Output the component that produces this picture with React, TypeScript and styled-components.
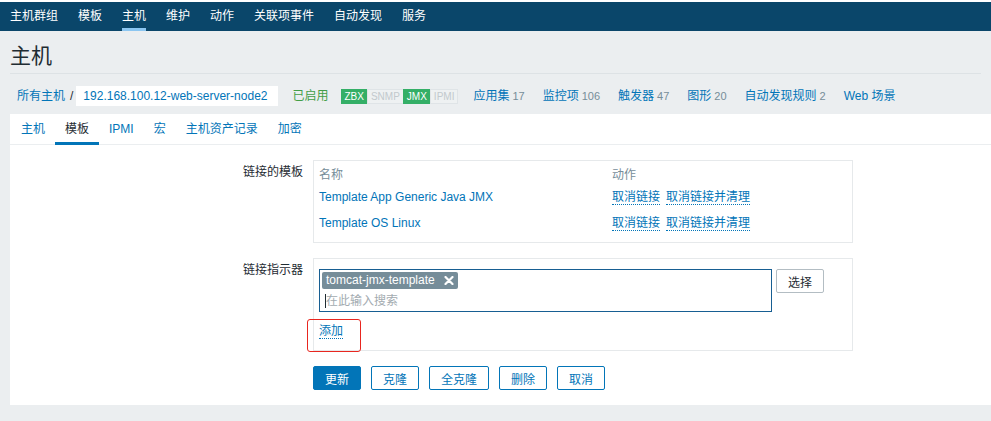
import React from "react";
import styled, { createGlobalStyle, css } from "styled-components";

const GlobalStyle = createGlobalStyle`
  html, body { margin: 0; padding: 0; }
  body {
    background: #ebeef0;
    font-family: "Liberation Sans", Arial, "Noto Sans CJK SC", sans-serif;
    font-size: 12px;
    color: #1f2c33;
    overflow: hidden;
  }
  * { box-sizing: border-box; }
`;

const TopNav = styled.nav`
  height: 31px;
  border-top: 2px solid #ffffff;
  background: #0a466a;
  display: flex;
`;

const NavItem = styled.a<{ $active?: boolean }>`
  position: relative;
  padding: 0 10px;
  line-height: 29px;
  color: #ffffff;
  text-decoration: none;
  ${(p) =>
    p.$active &&
    css`
      &::after {
        content: "";
        position: absolute;
        left: 10px;
        right: 10px;
        bottom: 0;
        height: 3px;
        background: #8cc6f1;
      }
    `}
`;

const PageHeader = styled.header`
  margin: 0 10px;
  padding: 13px 0 5px;
  border-bottom: 1px solid #dde2e5;
`;

const Title = styled.h1`
  margin: 0;
  font-size: 21px;
  line-height: 24px;
  font-weight: normal;
  color: #1f2c33;
`;

const Breadcrumbs = styled.div`
  margin: 0 10px;
  padding: 12px 0 8px 7px;
  display: flex;
  align-items: center;
  line-height: 14px;
`;

const CrumbLink = styled.a`
  color: #0275b8;
  text-decoration: none;
`;

const CrumbSep = styled.span`
  margin: 0 3px 0 5px;
  color: #1f2c33;
`;

const CurrentHost = styled.span`
  background: #ffffff;
  color: #0275b8;
  line-height: 20px;
  padding: 0 11px 0 7px;
`;

const Enabled = styled.span`
  margin-left: 14px;
  color: #429e47;
`;

const StatusGroup = styled.div`
  margin-left: 12px;
  display: flex;
`;

const StatusBox = styled.span<{ $on?: boolean }>`
  font-size: 10px;
  line-height: 13px;
  padding: 0 3px;
  border: 1px solid ${(p) => (p.$on ? "#34af67" : "#dfe4e7")};
  background: ${(p) => (p.$on ? "#34af67" : "#eef1f2")};
  color: ${(p) => (p.$on ? "#ffffff" : "#c2c9cd")};
  & + & {
    margin-left: -1px;
  }
`;

const HostLinks = styled.div`
  margin-left: 15px;
  display: flex;
  gap: 18px;
`;

const HostLink = styled.a`
  color: #0275b8;
  text-decoration: none;
  white-space: nowrap;
`;

const Count = styled.span`
  margin-left: 3px;
  font-size: 11px;
  color: #768d99;
`;

const Content = styled.main`
  margin-left: 10px;
  background: #ffffff;
  padding-bottom: 15px;
`;

const TabList = styled.div`
  display: flex;
  padding-left: 1px;
  border-bottom: 1px solid #ebeef0;
`;

const Tab = styled.a<{ $active?: boolean }>`
  padding: 8px 10px 6px;
  line-height: 14px;
  margin-bottom: -1px;
  border-bottom: 3px solid ${(p) => (p.$active ? "#0275b8" : "transparent")};
  color: ${(p) => (p.$active ? "#1f2c33" : "#0275b8")};
  text-decoration: none;
`;

const Form = styled.div`
  padding-top: 15px;
  display: flex;
  flex-direction: column;
  gap: 15px;
`;

const FormRow = styled.div`
  display: grid;
  grid-template-columns: 303px 540px;
  align-items: start;
`;

const Label = styled.label`
  text-align: right;
  padding: 5px 10px 0 0;
  line-height: 14px;
`;

const FieldBox = styled.div<{ $pad: string }>`
  position: relative;
  border: 1px solid #e6e9eb;
  padding: ${(p) => p.$pad};
`;

const Table = styled.table`
  border-collapse: collapse;
  width: 100%;
`;

const Th = styled.th`
  text-align: left;
  font-weight: normal;
  color: #768d99;
  height: 19px;
  padding: 0;
  line-height: 14px;
  vertical-align: middle;
`;

const Td = styled.td<{ $w?: number }>`
  height: 26px;
  padding: 0;
  line-height: 14px;
  vertical-align: middle;
  ${(p) => p.$w && `width: ${p.$w}px;`}
`;

const TemplateLink = styled.a`
  color: #0275b8;
  text-decoration: none;
`;

const ActionLink = styled.a`
  color: #0275b8;
  text-decoration: none;
  border-bottom: 1px dotted #0275b8;
  margin-right: 6px;
`;

const SelectRow = styled.div`
  display: flex;
  align-items: flex-start;
  gap: 4px;
`;

const MultiSelect = styled.div`
  width: 453px;
  height: 43px;
  border: 1px solid #175e92;
  padding: 2px;
  background: #ffffff;
`;

const Chip = styled.span`
  display: inline-flex;
  align-items: center;
  height: 17px;
  padding: 0 4px;
  background: #768d99;
  color: #ffffff;
  border-radius: 2px;
  line-height: 17px;
`;

const ChipRemove = styled.svg`
  margin-left: 9px;
  width: 10px;
  height: 9px;
`;

const SearchLine = styled.div`
  display: flex;
  margin-top: 5px;
  padding-left: 3px;
  line-height: 14px;
  color: #a3abb0;
`;

const Caret = styled.span`
  width: 1px;
  height: 14px;
  background: #1f2c33;
`;

const GreyButton = styled.button`
  height: 24px;
  padding: 0 11px;
  border: 1px solid #b3bdc3;
  border-radius: 2px;
  background: #ffffff;
  color: #1f2c33;
  font: inherit;
`;

const AddRow = styled.div`
  margin-top: 12px;
  line-height: 14px;
`;

const Annotation = styled.div`
  position: absolute;
  left: -7px;
  top: 60px;
  width: 54px;
  height: 33px;
  border: 1px solid #e8261f;
  border-radius: 3px;
  pointer-events: none;
`;

const ButtonRow = styled.div`
  grid-column: 2;
  display: flex;
  gap: 10px;
`;

const Button = styled.button<{ $primary?: boolean }>`
  height: 24px;
  padding: 0 11px;
  border: 1px solid #0275b8;
  border-radius: 2px;
  background: ${(p) => (p.$primary ? "#0275b8" : "#ffffff")};
  color: ${(p) => (p.$primary ? "#ffffff" : "#0275b8")};
  font: inherit;
`;

const navItems = ["主机群组", "模板", "主机", "维护", "动作", "关联项事件", "自动发现", "服务"];
const tabs = ["主机", "模板", "IPMI", "宏", "主机资产记录", "加密"];
const hostLinks: [string, string | null][] = [
  ["应用集", "17"],
  ["监控项", "106"],
  ["触发器", "47"],
  ["图形", "20"],
  ["自动发现规则", "2"],
  ["Web 场景", null],
];
const templates = ["Template App Generic Java JMX", "Template OS Linux"];

export default function App() {
  return (
    <>
      <GlobalStyle />
      <TopNav>
        {navItems.map((n) => (
          <NavItem key={n} $active={n === "主机"}>
            {n}
          </NavItem>
        ))}
      </TopNav>
      <PageHeader>
        <Title>主机</Title>
      </PageHeader>
      <Breadcrumbs>
        <CrumbLink>所有主机</CrumbLink>
        <CrumbSep>/</CrumbSep>
        <CurrentHost>192.168.100.12-web-server-node2</CurrentHost>
        <Enabled>已启用</Enabled>
        <StatusGroup>
          <StatusBox $on>ZBX</StatusBox>
          <StatusBox>SNMP</StatusBox>
          <StatusBox $on>JMX</StatusBox>
          <StatusBox>IPMI</StatusBox>
        </StatusGroup>
        <HostLinks>
          {hostLinks.map(([name, count]) => (
            <HostLink key={name}>
              {name}
              {count && <Count>{count}</Count>}
            </HostLink>
          ))}
        </HostLinks>
      </Breadcrumbs>
      <Content>
        <TabList>
          {tabs.map((t) => (
            <Tab key={t} $active={t === "模板"}>
              {t}
            </Tab>
          ))}
        </TabList>
        <Form>
          <FormRow>
            <Label>链接的模板</Label>
            <FieldBox $pad="4px 5px 6px">
              <Table>
                <thead>
                  <tr>
                    <Th>名称</Th>
                    <Th>动作</Th>
                  </tr>
                </thead>
                <tbody>
                  {templates.map((t) => (
                    <tr key={t}>
                      <Td $w={293}>
                        <TemplateLink>{t}</TemplateLink>
                      </Td>
                      <Td>
                        <ActionLink>取消链接</ActionLink>
                        <ActionLink>取消链接并清理</ActionLink>
                      </Td>
                    </tr>
                  ))}
                </tbody>
              </Table>
            </FieldBox>
          </FormRow>
          <FormRow>
            <Label>链接指示器</Label>
            <FieldBox $pad="10px 5px 12px">
              <SelectRow>
                <MultiSelect>
                  <Chip>
                    tomcat-jmx-template
                    <ChipRemove viewBox="0 0 10 9">
                      <path d="M1.5 1 L8.5 8 M8.5 1 L1.5 8" stroke="#ffffff" strokeWidth="2.2" strokeLinecap="round" />
                    </ChipRemove>
                  </Chip>
                  <SearchLine>
                    <Caret />
                    在此输入搜索
                  </SearchLine>
                </MultiSelect>
                <GreyButton>选择</GreyButton>
              </SelectRow>
              <AddRow>
                <ActionLink>添加</ActionLink>
              </AddRow>
              <Annotation />
            </FieldBox>
          </FormRow>
          <FormRow>
            <ButtonRow>
              <Button $primary>更新</Button>
              <Button>克隆</Button>
              <Button>全克隆</Button>
              <Button>删除</Button>
              <Button>取消</Button>
            </ButtonRow>
          </FormRow>
        </Form>
      </Content>
    </>
  );
}
